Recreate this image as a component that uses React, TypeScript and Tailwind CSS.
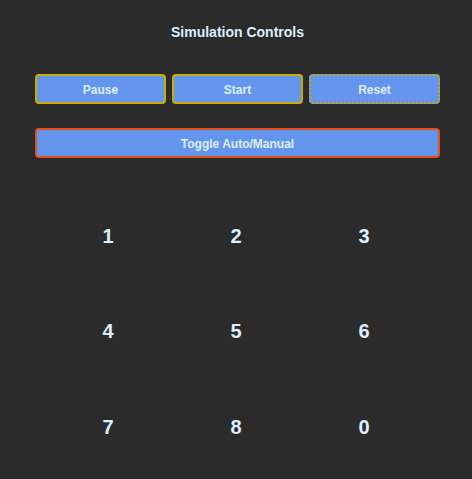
import React from 'react';

const App = () => {
  const keys = ['1', '2', '3', '4', '5', '6', '7', '8', '0'];

  return (
    <div
      className="w-[472px] h-[479px] bg-[#2b2b2b] text-[#dcefff] pl-[35px] pr-[32px] pt-[23px] overflow-hidden"
      style={{ fontFamily: '"Comic Sans MS", "Liberation Sans", sans-serif' }}
    >
      <h1 className="text-center text-[14px] font-bold leading-[18px]">Simulation Controls</h1>

      <div className="mt-[33px] grid grid-cols-3 gap-[6px]">
        <button className="h-[30px] pt-[2px] rounded-[4px] border-2 border-[#ccab00] bg-[#6495ed] text-[12px] font-bold text-[#dcefff]">
          Pause
        </button>
        <button className="h-[30px] pt-[2px] rounded-[4px] border-2 border-[#ccab00] bg-[#6495ed] text-[12px] font-bold text-[#dcefff]">
          Start
        </button>
        <button className="h-[30px] pt-[2px] rounded-[4px] border-2 border-dotted border-[#ccab00] bg-[#6495ed] text-[12px] font-bold text-[#dcefff]">
          Reset
        </button>
      </div>

      <button className="mt-[24px] w-full h-[30px] pt-[2px] rounded-[4px] border-2 border-[#e2501a] bg-[#6495ed] text-[12px] font-bold text-[#dcefff]">
        Toggle Auto/Manual
      </button>

      <div className="ml-[9px] mr-[12px] mt-[30px] grid grid-cols-3">
        {keys.map((k) => (
          <div key={k} className="h-[95.5px] flex items-center justify-center text-[20px] font-bold">
            {k}
          </div>
        ))}
      </div>
    </div>
  );
};

export default App;
